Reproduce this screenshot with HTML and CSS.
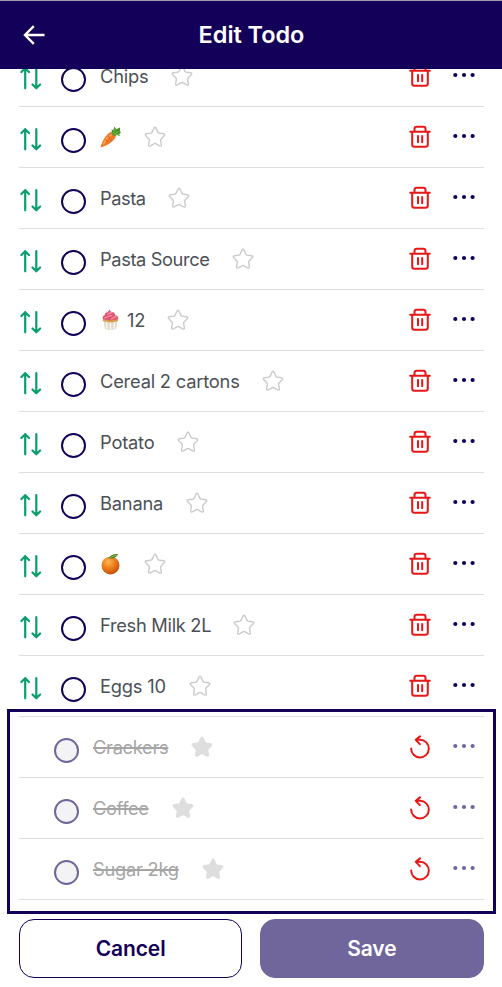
FILE: index.html
```
<!DOCTYPE html>
<html lang="en">
<head>
<meta charset="utf-8">
<title>Edit Todo</title>
<link rel="stylesheet" href="styles.css">
</head>
<body>
<svg class="defs" aria-hidden="true">
  <symbol id="sort" viewBox="0 0 22 24"><path d="M5.2 22.3V2.2M1.4 6 5.2 2.2 9 6M16.3 2.2v20.1M12.5 18.5l3.8 3.8 3.8-3.8"/></symbol>
  <symbol id="star" viewBox="0 0 22 22"><path d="M10 2.2Q11 .4 12 2.2L14 6.4Q14.3 7 15 7.1L19.6 7.8Q21.5 8.3 20.2 9.8L16.9 13.2Q16.5 13.7 16.6 14.3L17.4 18.8Q17.5 20.7 15.7 19.9L11.6 17.7Q11 17.4 10.4 17.7L6.3 19.9Q4.5 20.7 4.6 18.8L5.4 14.3Q5.5 13.7 5.1 13.2L1.8 9.8Q.5 8.3 2.4 7.8L7 7.1Q7.7 7 8 6.4Z"/></symbol>
  <symbol id="trash" viewBox="0 0 22 24"><path d="M1.2 6.8h19.6M3.2 6.8v12.7q0 2.2 2.2 2.2h11.2q2.2 0 2.2-2.2V6.8M5.5 6.5V4q0-2.3 2.3-2.3h6.4q2.3 0 2.3 2.3v2.5M9 11v6.2M13.2 11v6.2"/></symbol>
  <symbol id="undo" viewBox="0 0 22 24"><path d="M2.2 13.4A8.8 8.8 0 1 0 11 4.8H6.8M11 1.4 6.8 4.8l4 4.4"/></symbol>
  <symbol id="dots" viewBox="0 0 24 6"><circle cx="3.3" cy="3" r="2.1"/><circle cx="12" cy="3" r="2.1"/><circle cx="20.6" cy="3" r="2.1"/></symbol>
</svg>

<header class="bar">
  <svg class="back" viewBox="0 0 22 20"><path d="M21.500 10H1.8M10.8 1.2 2 10l8.8 8.8"/></svg>
  <h1>Edit Todo</h1>
</header>

<main class="content">
  <ul class="list">
    <li class="row"><svg class="sort"><use href="#sort"/></svg><i class="check"></i><span class="name chips">Chips</span><svg class="star"><use href="#star"/></svg><svg class="trash"><use href="#trash"/></svg><svg class="dots"><use href="#dots"/></svg></li>
    <li class="row"><svg class="sort"><use href="#sort"/></svg><i class="check"></i><span class="name emoji"><svg viewBox="0 0 22 22" role="img" aria-label="Carrot"><path d="M.5 22C2.500 15 6 9 10 6.500q3-2 5.500.5t0 5.500Q11 19 .5 22Z" fill="#ef7a27"/><path d="M4 18c2-5 5-8 8-9" stroke="#ffa55a" stroke-width="1.6" fill="none"/><path d="m8 10 2 1.500M6 14l2 1.500M11 14l1 1" stroke="#c9540f" stroke-width=".8"/><path d="m13 8-1-5 2 1 1-4 2 3 4-2v4l1 1-2 2 1 2-3-1-3 1Z" fill="#43932b"/><path d="m14 7 2-4M15 8l5-3M16 8l4 1" stroke="#79bd49"/></svg></span><svg class="star"><use href="#star"/></svg><svg class="trash"><use href="#trash"/></svg><svg class="dots"><use href="#dots"/></svg></li>
    <li class="row"><svg class="sort"><use href="#sort"/></svg><i class="check"></i><span class="name pasta">Pasta</span><svg class="star"><use href="#star"/></svg><svg class="trash"><use href="#trash"/></svg><svg class="dots"><use href="#dots"/></svg></li>
    <li class="row"><svg class="sort"><use href="#sort"/></svg><i class="check"></i><span class="name source">Pasta Source</span><svg class="star"><use href="#star"/></svg><svg class="trash"><use href="#trash"/></svg><svg class="dots"><use href="#dots"/></svg></li>
    <li class="row"><svg class="sort"><use href="#sort"/></svg><i class="check"></i><span class="name cupcake"><svg viewBox="0 0 22 22" role="img" aria-label="Cupcake"><path d="M3.500 11h15L17 20.500q-6 2-12 0Z" fill="#e3dcd1"/><path d="M7 13v7M11 13v8M15 13v7" stroke="#f7f3eb" stroke-width="1.5"/><path d="M3 10h16v2q-8 3-16 0Z" fill="#d9a34d"/><path d="M3 10q-1-3 2-4 0-3 3-3l2-3q1 3 4 3 2 1 2 3 4 1 3 4-8 3-16 0Z" fill="#df5772"/><path d="m5 9 7-3M8 5l4-2M12 10l5-3" stroke="#f496a4" stroke-width="1.2"/></svg>12</span><svg class="star"><use href="#star"/></svg><svg class="trash"><use href="#trash"/></svg><svg class="dots"><use href="#dots"/></svg></li>
    <li class="row"><svg class="sort"><use href="#sort"/></svg><i class="check"></i><span class="name cereal">Cereal 2 cartons</span><svg class="star"><use href="#star"/></svg><svg class="trash"><use href="#trash"/></svg><svg class="dots"><use href="#dots"/></svg></li>
    <li class="row"><svg class="sort"><use href="#sort"/></svg><i class="check"></i><span class="name potato">Potato</span><svg class="star"><use href="#star"/></svg><svg class="trash"><use href="#trash"/></svg><svg class="dots"><use href="#dots"/></svg></li>
    <li class="row"><svg class="sort"><use href="#sort"/></svg><i class="check"></i><span class="name banana">Banana</span><svg class="star"><use href="#star"/></svg><svg class="trash"><use href="#trash"/></svg><svg class="dots"><use href="#dots"/></svg></li>
    <li class="row"><svg class="sort"><use href="#sort"/></svg><i class="check"></i><span class="name emoji"><svg viewBox="0 0 22 22" role="img" aria-label="Orange"><defs><radialGradient id="peel" cx=".38" cy=".3" r=".75"><stop offset="0" stop-color="#ffb555"/><stop offset=".5" stop-color="#ee7c1a"/><stop offset="1" stop-color="#c04d05"/></radialGradient></defs><circle cx="11" cy="12.5" r="9.4" fill="url(#peel)"/><path d="M9 5.500Q11 0 19 .5 17 6 9 5.500Z" fill="#4d8527"/><path d="M10 5q4-3 7-3" stroke="#89b84f" fill="none"/></svg></span><svg class="star"><use href="#star"/></svg><svg class="trash"><use href="#trash"/></svg><svg class="dots"><use href="#dots"/></svg></li>
    <li class="row"><svg class="sort"><use href="#sort"/></svg><i class="check"></i><span class="name milk">Fresh Milk 2L</span><svg class="star"><use href="#star"/></svg><svg class="trash"><use href="#trash"/></svg><svg class="dots"><use href="#dots"/></svg></li>
    <li class="row"><svg class="sort"><use href="#sort"/></svg><i class="check"></i><span class="name eggs">Eggs 10</span><svg class="star"><use href="#star"/></svg><svg class="trash"><use href="#trash"/></svg><svg class="dots"><use href="#dots"/></svg></li>
  </ul>
  <ul class="list done">
    <li class="row"><i class="check"></i><span class="name crackers">Crackers</span><svg class="star"><use href="#star"/></svg><svg class="undo"><use href="#undo"/></svg><svg class="dots"><use href="#dots"/></svg></li>
    <li class="row"><i class="check"></i><span class="name coffee">Coffee</span><svg class="star"><use href="#star"/></svg><svg class="undo"><use href="#undo"/></svg><svg class="dots"><use href="#dots"/></svg></li>
    <li class="row"><i class="check"></i><span class="name sugar">Sugar 2kg</span><svg class="star"><use href="#star"/></svg><svg class="undo"><use href="#undo"/></svg><svg class="dots"><use href="#dots"/></svg></li>
  </ul>
</main>

<footer class="actions">
  <button class="btn cancel">Cancel</button>
  <button class="btn save">Save</button>
</footer>
</body>
</html>
```
FILE: styles.css
```
* { box-sizing: border-box; }
body {
  margin: 0;
  height: 987px;
  overflow: hidden;
  display: flex;
  flex-direction: column;
  background: #fff;
  font-family: Inter, "Liberation Sans", sans-serif;
}
svg { display: block; flex: none; fill: none; stroke-linecap: round; stroke-linejoin: round; }
.defs { position: absolute; width: 0; height: 0; }

.bar {
  flex: none;
  height: 69px;
  border-top: 1px solid #a09fb0;
  background: #130058;
  display: grid;
  grid-template-columns: 45px 1fr 45px;
  align-items: center;
}
.back { width: 22px; height: 20px; margin-left: 23px; stroke: #fff; stroke-width: 2.4; stroke-linecap: butt; stroke-linejoin: miter; }
.bar h1 {
  margin: -2px 0 0 1px;
  color: #fff;
  text-align: center;
  font-size: 23.5px;
  font-weight: 600;
  letter-spacing: -.05px;
}

.content { flex: none; height: 849.5px; overflow: hidden; }
.list { list-style: none; margin: 0; padding: 0 18.5px 0 19px; }
.list:first-child { margin-top: -23px; }
.row {
  height: 61.03px;
  border-bottom: 1px solid #dedede;
  display: flex;
  align-items: center;
}
.sort { width: 22px; height: 24px; margin: 3px 0 0 .5px; stroke: #0c9d6b; stroke-width: 2.2; }
.check {
  flex: none;
  width: 25px;
  height: 25px;
  margin: 7px 14.5px 0 19px;
  border: 2.5px solid #130058;
  border-radius: 50%;
}
.name {
  flex: none;
  color: #4b5157;
  font-size: 18.3px;
  line-height: 24px;
  letter-spacing: -.2px;
  white-space: nowrap;
  display: flex;
  align-items: center;
}
.name svg { width: 21px; height: 22px; }
.cupcake svg { margin-right: 6px; }
.chips { width: 48px; }
.emoji { width: 21px; }
.pasta { width: 45px; letter-spacing: -.45px; }
.source { width: 109px; letter-spacing: -.4px; }
.cupcake { width: 44px; }
.cereal { width: 139px; }
.potato { width: 54px; }
.banana { width: 63px; }
.milk { width: 110.5px; letter-spacing: -.3px; }
.eggs { width: 66px; }
.crackers { width: 75px; letter-spacing: -.3px; }
.coffee { width: 56px; letter-spacing: -.4px; }
.sugar { width: 86px; letter-spacing: -.25px; }
.star { width: 22px; height: 22px; margin: -1px auto 0 22.5px; stroke: #cbcbcb; stroke-width: 1.4; }
.trash, .undo { width: 22px; height: 24px; margin: -1px 22.5px 0 0; stroke: #e81717; stroke-width: 2; }
.dots { width: 24px; height: 6px; margin: -1.5px 7.5px 0 0; fill: #130058; }
.trash { margin-right: 21.5px; }
.undo { margin-right: 21.5px; }

.done { position: relative; }
.done::before {
  content: "";
  position: absolute;
  inset: -8px 6.5px -14px 7px;
  border: 3px solid #130058;
}
.done .check { margin-left: 34.5px; margin-right: 14.5px; background: #f3f2f4; border-color: #71669b; }
.done .name { display: block; color: #a5a5a5; text-decoration: line-through; text-decoration-thickness: 2px; }
.done .star { fill: #dedede; stroke: #dedede; }
.done .dots { fill: #71669b; }

.actions { display: grid; grid-template-columns: 1fr 1fr; gap: 18px; padding: 0 18.5px 0 19px; }
.btn {
  height: 59px;
  padding: 0;
  border: 1px solid #130058;
  border-radius: 15px;
  background: #fff;
  color: #130058;
  font: 600 21px Inter, "Liberation Sans", sans-serif;
  letter-spacing: -.1px;
}
.save { background: #71669b; border-color: #71669b; color: #fff; }
```
